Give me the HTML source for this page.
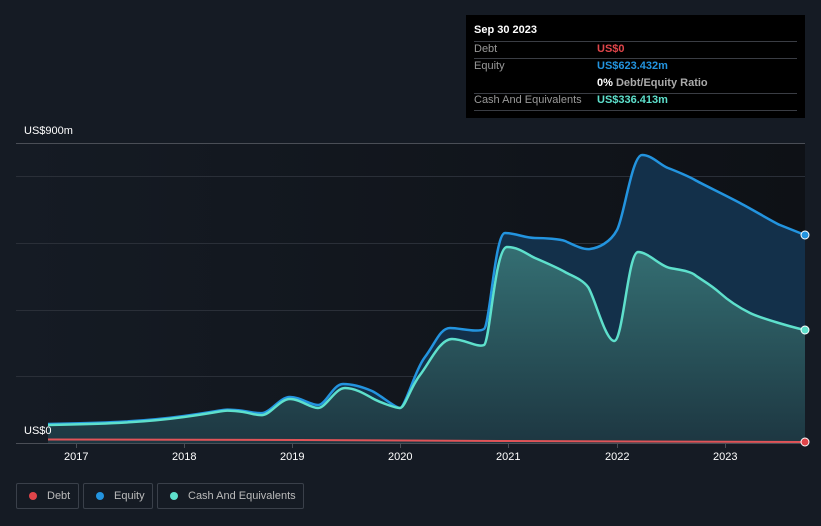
<!DOCTYPE html>
<html><head><style>
body{margin:0;width:821px;height:526px;background:#151b24;font-family:"Liberation Sans",sans-serif;overflow:hidden;position:relative}
.t{position:absolute;font-size:11px;color:#fff}
.tip{position:absolute;left:466px;top:15px;width:339px;height:103px;background:#000;}
.tip .r{position:absolute;left:8px;right:8px;border-top:1px solid #3a3d44}
.tip .l{position:absolute;left:8px;font-size:11px;color:#999}
.tip .v{position:absolute;left:131px;font-size:11px;font-weight:bold}
.leg{position:absolute;top:483px;height:26px;border:1px solid #3a404a;border-radius:2px;font-size:11px;color:#bbb;box-sizing:border-box;line-height:24px}
.leg i{display:inline-block;width:8px;height:8px;border-radius:50%;margin:0 10px 0 12px;vertical-align:-1px}
</style></head><body>
<svg width="821" height="526" style="position:absolute;left:0;top:0">
<defs>
<linearGradient id="bg" x1="0" x2="1" y1="0" y2="0"><stop offset="0" stop-color="#151b24"/><stop offset="1" stop-color="#0e1116"/></linearGradient>
<linearGradient id="cf" x1="0" x2="0" y1="0" y2="1"><stop offset="0" stop-color="#3a7a7a"/><stop offset="1" stop-color="#1f3840"/></linearGradient>
</defs>
<rect x="16" y="143" width="789" height="300" fill="url(#bg)"/>
<g stroke="#2a2f38" stroke-width="1">
<line x1="16" x2="805" y1="176.5" y2="176.5"/><line x1="16" x2="805" y1="243.5" y2="243.5"/><line x1="16" x2="805" y1="310.5" y2="310.5"/><line x1="16" x2="805" y1="376.5" y2="376.5"/>
</g>
<line x1="16" x2="805" y1="143.5" y2="143.5" stroke="#4a4e56"/>
<path d="M48,424 C100,423 140,422 184,416 S220,409 235,410 S255,414 263,413 S280,397 290,397 S310,405 318,405 S333,384 343,384 S365,388 372,391 S395,408 400,408 S415,370 425,357 S440,328 450,328 S478,333 484,329 S495,233 505,233 S525,238 535,238 S560,239 565,241 S582,250 590,249 S610,243 617,230 S632,155 642,155 S660,165 668,168 S690,177 695,180 S725,195 740,203 S775,223 780,225 S800,233 805,235 L805,443 L48,443Z" fill="#13304a"/>
<path d="M48,425 C100,424 140,423 184,417 S220,410 235,411 S255,416 263,415 S280,399 290,399 S310,408 318,408 S335,388 345,388 S365,394 372,398 S395,408 400,408 S410,388 420,375 S440,339 452,339 S478,348 484,345 S495,247 507,247 S528,255 535,258 S558,268 565,272 S582,279 588,287 S605,340 614,341 S628,252 638,252 S660,266 670,268 S690,271 695,275 S710,284 720,293 S740,308 750,313 S795,328 805,330 L805,443 L48,443Z" fill="url(#cf)" opacity="0.85"/>
<path d="M48,424 C100,423 140,422 184,416 S220,409 235,410 S255,414 263,413 S280,397 290,397 S310,405 318,405 S333,384 343,384 S365,388 372,391 S395,408 400,408 S415,370 425,357 S440,328 450,328 S478,333 484,329 S495,233 505,233 S525,238 535,238 S560,239 565,241 S582,250 590,249 S610,243 617,230 S632,155 642,155 S660,165 668,168 S690,177 695,180 S725,195 740,203 S775,223 780,225 S800,233 805,235" fill="none" stroke="#2394df" stroke-width="2.5"/>
<path d="M48,425 C100,424 140,423 184,417 S220,410 235,411 S255,416 263,415 S280,399 290,399 S310,408 318,408 S335,388 345,388 S365,394 372,398 S395,408 400,408 S410,388 420,375 S440,339 452,339 S478,348 484,345 S495,247 507,247 S528,255 535,258 S558,268 565,272 S582,279 588,287 S605,340 614,341 S628,252 638,252 S660,266 670,268 S690,271 695,275 S710,284 720,293 S740,308 750,313 S795,328 805,330" fill="none" stroke="#5ee0cc" stroke-width="2.5"/>
<line x1="16" x2="805" y1="443.5" y2="443.5" stroke="#4a4e56"/>
<path d="M48,439.5 L300,440 L500,441 L805,442" stroke="#e05458" stroke-width="2" fill="none"/>
<g stroke="#4a4e56"><line x1="76.5" x2="76.5" y1="443" y2="448"/><line x1="184.5" x2="184.5" y1="443" y2="448"/><line x1="292.5" x2="292.5" y1="443" y2="448"/><line x1="400.5" x2="400.5" y1="443" y2="448"/><line x1="508.5" x2="508.5" y1="443" y2="448"/><line x1="617.5" x2="617.5" y1="443" y2="448"/><line x1="725.5" x2="725.5" y1="443" y2="448"/></g>
<circle cx="805" cy="235" r="4" fill="#2394df" stroke="#fff" stroke-width="1"/>
<circle cx="805" cy="330" r="4" fill="#5ee0cc" stroke="#fff" stroke-width="1"/>
<circle cx="805" cy="442" r="4" fill="#e0454a" stroke="#fff" stroke-width="1"/>
</svg>
<div class="t" style="left:24px;top:125px">US$900m</div>
<div class="t" style="left:24px;top:425px">US$0</div>
<div class="t" style="left:64px;top:451px">2017</div>
<div class="t" style="left:172px;top:451px">2018</div>
<div class="t" style="left:280px;top:451px">2019</div>
<div class="t" style="left:388px;top:451px">2020</div>
<div class="t" style="left:496px;top:451px">2021</div>
<div class="t" style="left:605px;top:451px">2022</div>
<div class="t" style="left:713px;top:451px">2023</div>
<div class="tip">
<div style="position:absolute;left:8px;top:9px;font-size:11px;color:#fff;font-weight:bold">Sep 30 2023</div>
<div class="r" style="top:26px"></div>
<div class="l" style="top:28px">Debt</div><div class="v" style="top:28px;color:#e0454a">US$0</div>
<div class="r" style="top:43px"></div>
<div class="l" style="top:45px">Equity</div><div class="v" style="top:45px;color:#2394df">US$623.432m</div>
<div class="v" style="top:62px;color:#fff">0% <span style="color:#aaa">Debt/Equity Ratio</span></div>
<div class="r" style="top:78px"></div>
<div class="l" style="top:79px">Cash And Equivalents</div><div class="v" style="top:79px;color:#5ee0cc">US$336.413m</div>
<div class="r" style="top:95px"></div>
</div>
<div class="leg" style="left:16px;width:63px"><i style="background:#e0454a"></i>Debt</div>
<div class="leg" style="left:83px;width:70px"><i style="background:#2394df"></i>Equity</div>
<div class="leg" style="left:157px;width:147px"><i style="background:#5ee0cc"></i>Cash And Equivalents</div>
</body></html>
